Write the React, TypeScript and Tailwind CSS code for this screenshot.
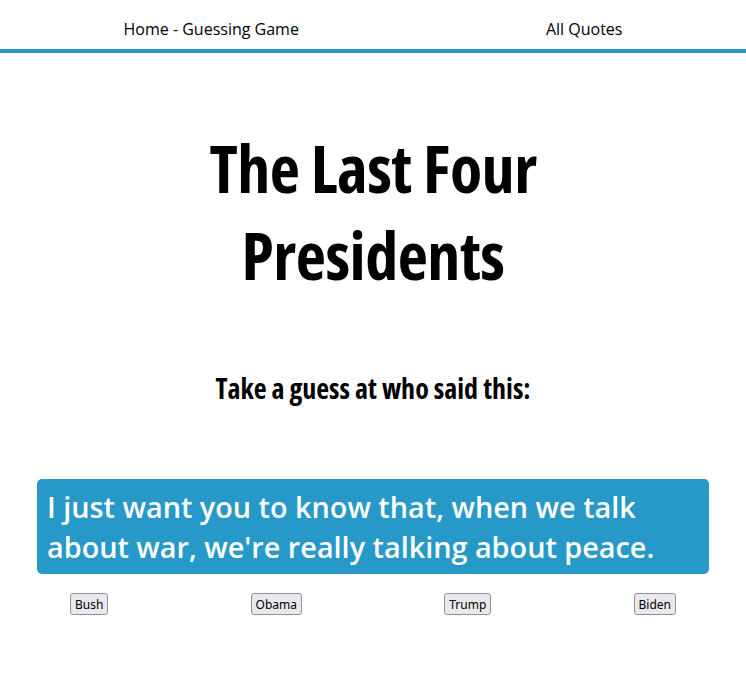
export default function App() {
  const names = ["Bush", "Obama", "Trump", "Biden"];
  return (
    <div className="min-h-screen bg-white font-['Open_Sans',sans-serif] text-black">
      <nav className="flex justify-around items-start h-[53px] pt-[17px] border-b-4 border-[#2798c8] text-[16px] leading-[24px]">
        <span>Home - Guessing Game</span>
        <span>All Quotes</span>
      </nav>
      <h1 className="mx-auto mt-[71px] max-w-[420px] text-center text-[66px] leading-[87px] font-bold font-stretch-condensed tracking-[-0.5px]">
        The Last Four Presidents
      </h1>
      <h2 className="mt-[71px] text-center text-[28px] leading-[38px] font-bold font-stretch-condensed">
        Take a guess at who said this:
      </h2>
      <div className="mx-[37px] mt-[72px] rounded-[5px] bg-[#2799c8] px-[10px] pt-[8px] pb-[7px] text-white text-[28.8px] leading-[40px] font-semibold">
        I just want you to know that, when we talk about war, we're really talking about peace.
      </div>
      <div className="flex justify-between px-[70px] mt-[19px]">
        {names.map((n) => (
          <button
            key={n}
            className="h-[22px] px-[4px] rounded-[3px] border border-[#8f8f9d] bg-[#e9e9ed] text-[12px] leading-[17px] font-['Noto_Sans',sans-serif] text-black"
          >
            {n}
          </button>
        ))}
      </div>
    </div>
  );
}
